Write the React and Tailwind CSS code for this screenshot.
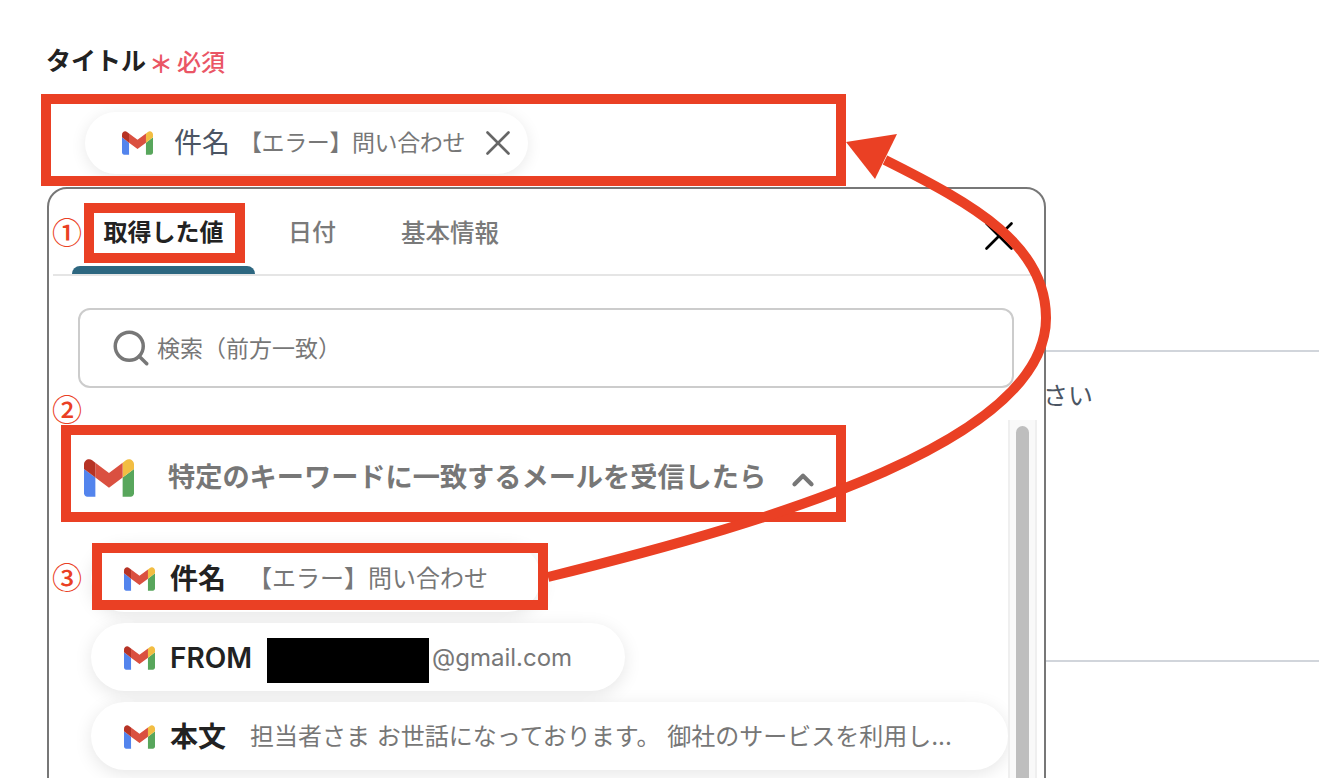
import { Search, X, ChevronUp } from "lucide-react"

function GmailIcon({ className }) {
    return (
        <svg viewBox="52 42 88 66" className={className}>
            <path fill="#5384ed" d="M58 108h14V74L52 59v43c0 3.32 2.69 6 6 6" />
            <path fill="#58a65c" d="M120 108h14c3.32 0 6-2.69 6-6V59l-20 15" />
            <path fill="#f2bd42" d="M120 48v26l20-15v-8c0-7.42-8.47-11.65-14.4-7.2" />
            <path fill="#da5040" d="M72 74V48l24 18 24-18v26L96 92" />
            <path fill="#b63325" d="M52 51v8l20 15V48l-5.6-4.2c-5.94-4.45-14.4-.22-14.4 7.2" />
        </svg>
    )
}

function ValueChip({ label, className, children }) {
    return (
        <div className={"flex h-[68px] items-center rounded-full bg-white pl-[33px] pt-[2px] shadow-[0_4px_18px_rgba(0,0,0,0.1)] " + className}>
            <GmailIcon className="h-[24px] w-[31px] shrink-0" />
            <span className="ml-[15px] shrink-0 text-[28px] font-semibold text-[#222]">{label}</span>
            {children}
        </div>
    )
}

export default function App() {
    return (
        <div className="relative h-[778px] overflow-hidden bg-white font-['Inter','Noto_Sans_CJK_JP',sans-serif]">
            {/* Form behind the popover */}
            <div className="pl-[46px] pt-[44px]">
                <div className="flex h-[36px] items-center">
                    <span className="text-[25px] font-bold text-[#222]">タイトル</span>
                    <span className="ml-[3px] mt-[6px] text-[24px] font-bold leading-none text-[#ea5565]">＊</span>
                    <span className="ml-[4px] mt-[2px] text-[24px] font-medium text-[#ea5565]">必須</span>
                </div>
                <div className="ml-[39px] mt-[32px] flex h-[62px] w-[443px] items-center rounded-full bg-white pl-[37px] shadow-[0_3px_16px_rgba(0,0,0,0.09)]">
                    <GmailIcon className="h-[24px] w-[31px] shrink-0" />
                    <span className="ml-[21px] text-[28px] text-[#4b5563]">件名</span>
                    <span className="ml-[9px] text-[23px] tracking-[-0.4px] text-[#777]">【エラー】問い合わせ</span>
                    <X className="ml-[12px] h-[42px] w-[42px] shrink-0 text-[#666]" strokeWidth={1.5} />
                </div>
            </div>
            <div className="ml-[47px] mt-[176px] h-[310px] border-t-2 border-[#d1d5db] pl-[996px] pt-[26px]">
                <span className="text-[25px] text-[#4b5563]">さい</span>
            </div>
            <div className="ml-[47px] border-t-2 border-[#d1d5db]" />

            {/* Popover */}
            <div className="absolute left-[47px] top-[187px] h-[640px] w-[999px] rounded-[20px] border-2 border-[#777] bg-white">
                <div className="mx-[4px] flex h-[87px] border-b-2 border-[#e5e5e5] pl-[19px]">
                    <div className="relative flex w-[183px] items-center justify-center pt-[3px] text-[24px] font-bold text-[#222]">
                        取得した値
                        <div className="absolute bottom-0 left-0 right-0 h-[8px] rounded-t-[8px] bg-[#2d6780]" />
                    </div>
                    <div className="flex items-center px-[33px] pt-[3px] text-[24px] font-medium text-[#7a7a7a]">日付</div>
                    <div className="flex items-center px-[32px] pt-[3px] text-[24.5px] font-medium text-[#7a7a7a]">基本情報</div>
                    <X className="ml-auto mr-[16px] mt-[22px] h-[50px] w-[50px] text-black" strokeWidth={1.3} />
                </div>
                <div className="ml-[29px] mt-[32px] flex h-[80px] w-[936px] items-center rounded-[12px] border-2 border-[#ccc] pl-[30px]">
                    <Search className="h-[42px] w-[42px] text-[#777]" strokeWidth={2} />
                    <span className="ml-[5px] pt-[2px] text-[23px] text-[#777]">検索（前方一致）</span>
                </div>
                <div className="mt-[32px] flex">
                    <div className="w-[959px] pl-[42px]">
                        <div className="-ml-[7px] mt-[14px] flex h-[88px] items-center">
                            <GmailIcon className="h-[38px] w-[50px] shrink-0" />
                            <span className="ml-[34px] pt-[1px] text-[27.2px] font-semibold text-[#777]">特定のキーワードに一致するメールを受信したら</span>
                            <ChevronUp className="ml-[20px] mt-[4px] h-[34px] w-[34px] text-[#777]" strokeWidth={3} />
                        </div>
                        <div className="mt-[22px] flex flex-col gap-[11px]">
                            <ValueChip label="件名" className="w-[450px]">
                                <span className="ml-[22px] text-[24px] text-[#777]">【エラー】問い合わせ</span>
                            </ValueChip>
                            <ValueChip label="FROM" className="w-[534px]">
                                <span className="ml-[15px] mt-[5px] h-[45px] w-[162px] shrink-0 bg-black" />
                                <span className="ml-[3px] text-[24px] text-[#777]">@gmail.com</span>
                            </ValueChip>
                            <ValueChip label="本文" className="w-[917px]">
                                <span className="ml-[24px] text-[24px] text-[#777]">担当者さま お世話になっております。 御社のサービスを利用し...</span>
                            </ValueChip>
                        </div>
                    </div>
                    <div className="h-[400px] w-[29px] border-x-2 border-[#efefef] bg-[#f9f9f9] px-[6px] pt-[6px]">
                        <div className="h-full rounded-full bg-[#bebebe]" />
                    </div>
                </div>
            </div>

            {/* Annotations */}
            <div className="absolute left-[41px] top-[94px] h-[92px] w-[805px] border-[10px] border-[#ea4024]" />
            <div className="absolute left-[84px] top-[203px] h-[60px] w-[161px] border-[10px] border-[#ea4024]" />
            <div className="absolute left-[61px] top-[425px] h-[97px] w-[785px] border-[10px] border-[#ea4024]" />
            <div className="absolute left-[92px] top-[543px] h-[67px] w-[456px] border-[10px] border-[#ea4024]" />
            <span className="absolute left-[52px] top-[211px] font-['Noto_Sans_CJK_JP',sans-serif] text-[30px] font-medium leading-[40px] text-[#ea4024]">①</span>
            <span className="absolute left-[52px] top-[388px] font-['Noto_Sans_CJK_JP',sans-serif] text-[30px] font-medium leading-[40px] text-[#ea4024]">②</span>
            <span className="absolute left-[52px] top-[556px] font-['Noto_Sans_CJK_JP',sans-serif] text-[30px] font-medium leading-[40px] text-[#ea4024]">③</span>
            <svg className="absolute left-0 top-0 h-[778px] w-[1319px]" viewBox="0 0 1319 778" fill="none">
                <path d="M548 577C780 520 1046 440 1046 318C1046 245 975 205 885 160" stroke="#ea4024" strokeWidth="10" />
                <path d="M846 142L897 134L875 179Z" fill="#ea4024" />
            </svg>
        </div>
    )
}
